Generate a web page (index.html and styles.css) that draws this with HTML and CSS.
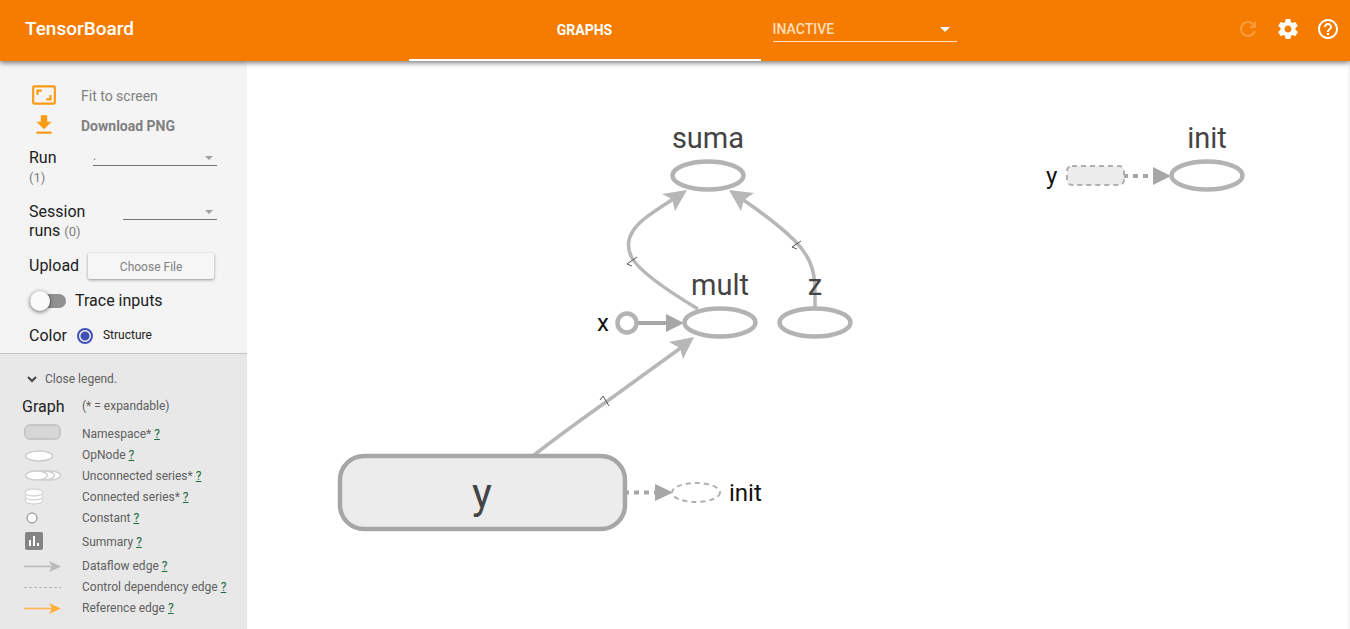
FILE: index.html
```html
<!DOCTYPE html>
<html lang="en">
<head>
<meta charset="utf-8">
<title>TensorBoard</title>
<link rel="stylesheet" href="styles.css">
</head>
<body>
<header class="toolbar">
  <h1 class="brand">TensorBoard</h1>
  <nav class="tabs"><button class="tab" type="button">GRAPHS</button></nav>
  <div class="picker picker-light">
    <select class="picker-select" aria-label="Inactive dashboards"><option>INACTIVE</option></select>
  </div>
  <div class="actions">
    <button class="icon-button" type="button" aria-label="Reload" disabled><svg viewBox="0 0 24 24"><path d="M17.65 6.35C16.2 4.9 14.21 4 12 4c-4.42 0-7.99 3.58-7.99 8s3.57 8 7.99 8c3.73 0 6.84-2.55 7.73-6h-2.08c-.82 2.33-3.04 4-5.65 4-3.31 0-6-2.69-6-6s2.69-6 6-6c1.66 0 3.14.69 4.22 1.78L13 11h7V4l-2.35 2.35z"/></svg></button>
    <button class="icon-button" type="button" aria-label="Settings"><svg viewBox="0 0 24 24"><path d="M19.43 12.98c.04-.32.07-.64.07-.98s-.03-.66-.07-.98l2.11-1.65c.19-.15.24-.42.12-.64l-2-3.46c-.12-.22-.39-.3-.61-.22l-2.49 1c-.52-.4-1.08-.73-1.69-.98l-.38-2.65C14.46 2.18 14.25 2 14 2h-4c-.25 0-.46.18-.49.42l-.38 2.65c-.61.25-1.17.59-1.69.98l-2.49-1c-.23-.09-.49 0-.61.22l-2 3.46c-.13.22-.07.49.12.64l2.11 1.65c-.04.32-.07.65-.07.98s.03.66.07.98l-2.11 1.65c-.19.15-.24.42-.12.64l2 3.46c.12.22.39.3.61.22l2.49-1c.52.4 1.08.73 1.69.98l.38 2.65c.03.24.24.42.49.42h4c.25 0 .46-.18.49-.42l.38-2.65c.61-.25 1.17-.59 1.69-.98l2.49 1c.23.09.49 0 .61-.22l2-3.46c.12-.22.07-.49-.12-.64l-2.11-1.65zM12 15.5c-1.93 0-3.5-1.57-3.5-3.5s1.57-3.5 3.5-3.5 3.5 1.57 3.5 3.5-1.57 3.5-3.5 3.5z"/></svg></button>
    <button class="icon-button" type="button" aria-label="Help"><svg viewBox="0 0 24 24"><path d="M11 18h2v-2h-2v2zm1-16C6.48 2 2 6.48 2 12s4.48 10 10 10 10-4.48 10-10S17.52 2 12 2zm0 18c-4.41 0-8-3.59-8-8s3.59-8 8-8 8 3.59 8 8-3.59 8-8 8zm0-14c-2.21 0-4 1.79-4 4h2c0-1.1.9-2 2-2s2 .9 2 2c0 2-3 1.75-3 5h2c0-2.25 3-2.5 3-5 0-2.21-1.79-4-4-4z"/></svg></button>
  </div>
</header>
<div class="workspace">
  <aside class="sidebar">
    <div class="controls">
      <button class="command" type="button">
        <svg class="command-icon" viewBox="0 0 24 24"><path d="M19 12h-2v3h-3v2h5v-5zM7 9h3V7H5v5h2V9zm14-6H3c-1.1 0-2 .9-2 2v14c0 1.1.9 2 2 2h18c1.1 0 2-.9 2-2V5c0-1.1-.9-2-2-2zm0 16.01H3V4.99h18v14.02z"/></svg>
        <span class="command-text">Fit to screen</span>
      </button>
      <button class="command command-strong" type="button">
        <svg class="command-icon" viewBox="0 0 24 24"><path d="M19 9h-4V3H9v6H5l7 7 7-7zM5 18v2h14v-2H5z"/></svg>
        <span class="command-text">Download PNG</span>
      </button>
      <div class="field field-run">
        <label class="field-label" for="run">Run <span class="count">(1)</span></label>
        <div class="picker"><select class="picker-select" id="run"><option>.</option></select></div>
      </div>
      <div class="field field-session">
        <label class="field-label" for="session"><span>Session</span> <span>runs</span> <span class="count">(0)</span></label>
        <div class="picker"><select class="picker-select" id="session"></select></div>
      </div>
      <div class="row">
        <span>Upload</span>
        <button class="file-button" type="button">Choose File</button>
      </div>
      <label class="row">
        <input class="toggle" type="checkbox">
        <span>Trace inputs</span>
      </label>
      <div class="row row-color">
        <span>Color</span>
        <input class="radio" type="radio" id="structure" name="color" checked>
        <label class="radio-label" for="structure">Structure</label>
      </div>
    </div>
    <section class="legend">
      <button class="legend-toggle" type="button">
        <svg class="chevron" viewBox="0 0 12 12"><path d="M2 4l4 4 4-4"/></svg>
        <span>Close legend.</span>
      </button>
      <div class="legend-row legend-head"><h2 class="legend-title">Graph</h2><span>(* = expandable)</span></div>
      <div class="legend-row">
        <svg class="key" viewBox="0 0 38 20"><rect x="1" y="1" width="35" height="14" rx="5" fill="#d6d6d6" stroke="#c6c6c6" stroke-width="2"/></svg>
        <span>Namespace* <a href="#namespace">?</a></span>
      </div>
      <div class="legend-row">
        <svg class="key" viewBox="0 0 38 20"><ellipse cx="15" cy="11" rx="13.5" ry="5" fill="#fff" stroke="#ccc" stroke-width="1.5"/></svg>
        <span>OpNode <a href="#opnode">?</a></span>
      </div>
      <div class="legend-row">
        <svg class="key" viewBox="0 0 38 20"><g fill="#fff" stroke="#ccc" stroke-width="1.3"><ellipse cx="26" cy="9.500" rx="10.500" ry="4.500"/><ellipse cx="19.500" cy="9.500" rx="11" ry="4.500"/><ellipse cx="12.500" cy="9.500" rx="11" ry="4.500"/></g></svg>
        <span>Unconnected series* <a href="#unconnected">?</a></span>
      </div>
      <div class="legend-row">
        <svg class="key" viewBox="0 0 38 20"><g fill="#fff" stroke="#c8c8c8"><ellipse cx="10" cy="13.500" rx="9" ry="3.500"/><ellipse cx="10" cy="9.500" rx="9" ry="3.500"/><ellipse cx="10" cy="5.500" rx="9" ry="3.500"/></g></svg>
        <span>Connected series* <a href="#connected">?</a></span>
      </div>
      <div class="legend-row">
        <svg class="key" viewBox="0 0 38 20"><circle cx="8" cy="10" r="5" fill="#fff" stroke="#848484"/></svg>
        <span>Constant <a href="#constant">?</a></span>
      </div>
      <div class="legend-row legend-row-tall">
        <svg class="key" viewBox="0 0 38 20"><rect x="1" y="0" width="18" height="18" rx="2" fill="#848484"/><path d="M6 8v6M10 4v10M14 11v3" stroke="#fff" stroke-width="2"/></svg>
        <span>Summary <a href="#summary">?</a></span>
      </div>
      <div class="legend-row">
        <svg class="key" viewBox="0 0 38 20"><path d="M0 10.500h28" stroke="#b9b9b9" stroke-width="1.500"/><path d="M25 5l12 5.500L25 16l3-5.500z" fill="#b9b9b9"/></svg>
        <span>Dataflow edge <a href="#dataflow">?</a></span>
      </div>
      <div class="legend-row">
        <svg class="key" viewBox="0 0 38 20"><path d="M0 10.500h37" stroke="#b4b4b4" stroke-dasharray="3 2"/></svg>
        <span>Control dependency edge <a href="#control">?</a></span>
      </div>
      <div class="legend-row">
        <svg class="key" viewBox="0 0 38 20"><path d="M0 10.500h28" stroke="#ffb74d" stroke-width="1.500"/><path d="M25 5l12 5.500L25 16l3-5.500z" fill="#ffb03b"/></svg>
        <span>Reference edge <a href="#reference">?</a></span>
      </div>
    </section>
  </aside>
  <main class="canvas">
    <svg class="graph" viewBox="247 61 1101 568" preserveAspectRatio="xMinYMin meet" role="img" aria-label="Computation graph">
      <g class="edges">
        <path d="M698 309C668 291 640 272 632 258C625 245 628 232 644 219C654 211 664 205 675 198"/>
        <path d="M815 308V290C815 268 808 254 794 240C779 225 761 212 742 199"/>
        <path d="M534 455C565 431 585 417 606 402L682 347"/>
      </g>
      <g class="arrows">
        <path d="M687 190L662 194L672 199L675 211z"/>
        <path d="M729 190L754 193L744 200L741 211z"/>
        <path d="M694 337L669 342L680 348L683 359z"/>
      </g>
      <g class="ticks">
        <path d="M637 257L627 264L632 266"/>
        <path d="M801 241L792 247L797 249"/>
        <path d="M609 406L603 396L600 400"/>
      </g>
      <g class="inputs">
        <path d="M638 323H668"/>
        <path d="M1124 176H1154" stroke-dasharray="5 5" stroke-dashoffset="1"/>
        <path d="M624 492.500H656" stroke-dasharray="5 5"/>
      </g>
      <g class="input-arrows">
        <path d="M666 314L684 323L666 332z"/>
        <path d="M1153 167L1171 176L1153 185z"/>
        <path d="M655 484L673 492.500L655 501z"/>
      </g>
      <g class="ops">
        <ellipse cx="708" cy="175.500" rx="35.500" ry="14"/>
        <ellipse cx="720" cy="322.500" rx="35.500" ry="14"/>
        <ellipse cx="815" cy="322.500" rx="35.500" ry="14"/>
        <ellipse cx="1207" cy="175.500" rx="35.500" ry="14"/>
        <circle cx="627" cy="323" r="9.500"/>
      </g>
      <rect class="scope" x="340" y="456" width="285" height="73" rx="24"/>
      <g class="refs">
        <rect x="1067" y="166" width="57" height="19" rx="5" fill="#ececec"/>
        <ellipse cx="696" cy="492.500" rx="24" ry="9.500" fill="#fff"/>
      </g>
      <g class="names">
        <text x="708" y="148">suma</text>
        <text x="720" y="295">mult</text>
        <text x="815" y="295">z</text>
        <text x="1207" y="148">init</text>
        <text class="scope-name" x="482" y="508">y</text>
      </g>
      <g class="small-names">
        <text x="597" y="331">x</text>
        <text x="1046" y="184">y</text>
        <text x="729" y="501">init</text>
      </g>
    </svg>
  </main>
</div>
</body>
</html>
```
FILE: styles.css
```css
* { box-sizing: border-box; }
body {
  margin: 0;
  min-height: 100vh;
  display: flex;
  flex-direction: column;
  font-family: Roboto, "Liberation Sans", sans-serif;
  color: #212121;
  background: #fff;
}
button { border: 0; padding: 0; background: none; font: inherit; color: inherit; cursor: pointer; }

.toolbar {
  display: flex;
  height: 61px;
  padding: 0 10px 0 25px;
  background: #f57c00;
  color: #fff;
  box-shadow: 0 2px 5px rgba(0, 0, 0, .5);
  z-index: 1;
}
.brand { flex: 1; margin: 0; font-size: 19px; font-weight: 500; line-height: 58px; }
.tabs { flex: 0 0 352px; display: flex; }
.tab { flex: 1; border-bottom: 2px solid #fff; font-size: 14px; font-weight: 700; line-height: 56px; }
.actions { flex: 1; display: flex; justify-content: flex-end; align-items: center; gap: 16px; padding-bottom: 3px; }
.icon-button { width: 24px; height: 24px; }
.icon-button svg { display: block; fill: #fff; }
.icon-button:disabled { opacity: .25; }

.picker { position: relative; flex: 1; border-bottom: 1px solid #737373; }
.picker::after {
  content: "";
  position: absolute;
  right: 4px;
  bottom: 5px;
  border: 4px solid transparent;
  border-top-color: #a0a0a0;
  border-bottom: 0;
  pointer-events: none;
}
.picker-select {
  display: block;
  width: 100%;
  height: 18px;
  padding: 0;
  border: 0;
  appearance: none;
  background: none;
  color: #777;
  font: 12px/18px Roboto, sans-serif;
}
.picker-light { flex: 0 0 184px; align-self: flex-start; margin: 16px 0 0 12px; border-color: #ffe3c4; }
.picker-light::after { right: 7px; bottom: 9px; border-width: 5px 5px 0; border-top-color: #fff; }
.picker-light .picker-select { height: 25px; color: #ffdfbd; font-size: 14px; font-weight: 500; }

.workspace { flex: 1; display: flex; }
.sidebar { flex: 0 0 247px; display: flex; flex-direction: column; background: #f4f4f4; }
.controls { padding: 19px 30px 0 29px; font-size: 16px; line-height: 19px; }
.command {
  display: grid;
  grid-template-columns: 26px 1fr;
  gap: 24px;
  align-items: center;
  height: 30px;
  padding-left: 2px;
  font-size: 14px;
  color: #808080;
}
.command-text { padding-top: 2px; }
.command-strong { font-weight: 700; }
.command-icon { width: 26px; height: 26px; fill: #fb9a13; }
.field { display: flex; align-items: flex-start; height: 54px; padding-top: 7px; }
.field-label { padding-top: 1px; }
.field-run { gap: 34px; }
.field-run .field-label { width: 30px; }
.field-session { gap: 24px; }
.field-session .field-label { width: 70px; }
.count { font-size: 13px; color: #808080; }
.row { display: flex; align-items: center; gap: 9px; height: 35px; }
.row-color { gap: 10px; }
.file-button {
  flex: 0 0 126px;
  height: 26px;
  border-radius: 2px;
  background: #f6f6f6;
  box-shadow: 0 1px 3px rgba(0, 0, 0, .4);
  font-size: 12px;
  line-height: 28px;
  color: #808080;
}
.toggle {
  position: relative;
  appearance: none;
  width: 36px;
  height: 14px;
  margin: 0 0 0 1px;
  border-radius: 7px;
  background: #919191;
}
.toggle::before {
  content: "";
  position: absolute;
  top: -3px;
  left: 0;
  width: 20px;
  height: 20px;
  border-radius: 50%;
  background: #fafafa;
  box-shadow: 0 1px 4px rgba(0, 0, 0, .6);
}
.radio {
  appearance: none;
  width: 16px;
  height: 16px;
  margin: 0;
  border: 2px solid #3f51b5;
  border-radius: 50%;
  background: radial-gradient(circle, #3f51b5 4px, transparent 5px);
}
.radio-label { font-size: 12px; }

.legend {
  flex: 1;
  padding: 15px 0 10px 22px;
  border-top: 1px solid #c4c4c4;
  background: #e8e8e8;
  font-size: 12px;
  color: #606060;
}
.legend-toggle { display: flex; align-items: center; gap: 7px; height: 20px; padding-left: 4px; }
.chevron { width: 12px; height: 12px; fill: none; stroke: #444; stroke-width: 2; }
.legend-row { display: grid; grid-template-columns: 38px 1fr; gap: 20px; align-items: center; height: 21px; padding-left: 2px; }
.legend-head { height: 34px; padding-left: 0; grid-template-columns: 40px 1fr; }
.legend-title { margin: 0; font-size: 16px; font-weight: 400; color: #212121; }
.legend-row-tall { height: 27px; }
.key { width: 38px; height: 20px; }
.legend a { color: #1b6b3a; }

.canvas { flex: 1; min-width: 0; border-right: 2px solid #f5f5f5; }
.graph { display: block; width: 100%; height: auto; }
.edges, .ticks, .inputs, .ops, .refs { fill: none; }
.edges { stroke: #b7b7b7; stroke-width: 3.5px; }
.arrows { fill: #b7b7b7; }
.ticks { stroke: #555; }
.inputs { stroke: #a6a6a6; stroke-width: 4px; }
.input-arrows { fill: #a6a6a6; }
.ops { stroke: #b3b3b3; stroke-width: 4.5px; }
.ops ellipse, .ops circle { fill: #fff; }
.scope { fill: #ececec; stroke: #a6a6a6; stroke-width: 4.5px; }
.refs { stroke: #b0b0b0; stroke-width: 2px; stroke-dasharray: 5 4; }
.names { fill: #444; font-size: 29px; text-anchor: middle; }
.scope-name { font-size: 42px; }
.small-names { fill: #111; font-size: 24px; }
```
